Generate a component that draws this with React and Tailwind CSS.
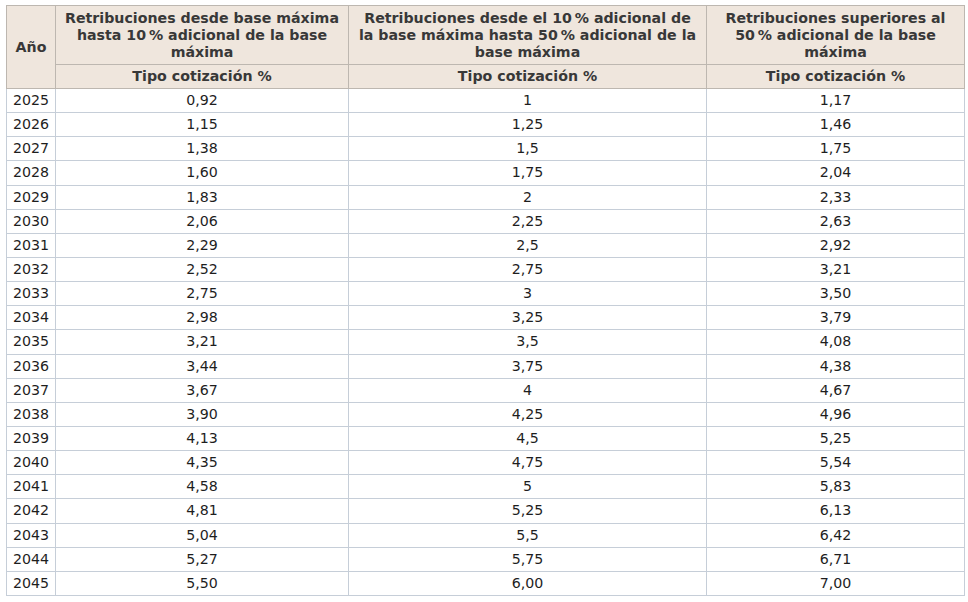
const rows = [
  ["2025", "0,92", "1", "1,17"],
  ["2026", "1,15", "1,25", "1,46"],
  ["2027", "1,38", "1,5", "1,75"],
  ["2028", "1,60", "1,75", "2,04"],
  ["2029", "1,83", "2", "2,33"],
  ["2030", "2,06", "2,25", "2,63"],
  ["2031", "2,29", "2,5", "2,92"],
  ["2032", "2,52", "2,75", "3,21"],
  ["2033", "2,75", "3", "3,50"],
  ["2034", "2,98", "3,25", "3,79"],
  ["2035", "3,21", "3,5", "4,08"],
  ["2036", "3,44", "3,75", "4,38"],
  ["2037", "3,67", "4", "4,67"],
  ["2038", "3,90", "4,25", "4,96"],
  ["2039", "4,13", "4,5", "5,25"],
  ["2040", "4,35", "4,75", "5,54"],
  ["2041", "4,58", "5", "5,83"],
  ["2042", "4,81", "5,25", "6,13"],
  ["2043", "5,04", "5,5", "6,42"],
  ["2044", "5,27", "5,75", "6,71"],
  ["2045", "5,50", "6,00", "7,00"],
];

export default function App() {
  const font = { fontFamily: '"DejaVu Sans", Verdana, sans-serif' };
  const th = "border border-[#bdb7b0] bg-[#efe6dd] text-[#383838] font-bold text-center align-middle px-0 whitespace-nowrap";
  const td = "border border-[#c6ced8] text-[#1e1e1e] text-center align-middle p-0";
  return (
    <div className="w-[968px] h-[602px] bg-white pt-[5px] pl-[6px]" style={font}>
      <table className="border-collapse table-fixed text-[14.2px] leading-[17px]" style={{ width: 958 }}>
        <colgroup>
          <col style={{ width: 49 }} />
          <col style={{ width: 293 }} />
          <col style={{ width: 358 }} />
          <col style={{ width: 258 }} />
        </colgroup>
        <thead>
          <tr className="h-[59px]">
            <th rowSpan={2} className={th}>Año</th>
            <th className={th}>
              Retribuciones desde base máxima
              <br />
              hasta 10&#8239;% adicional de la base
              <br />
              máxima
            </th>
            <th className={th}>
              Retribuciones desde el 10&#8239;% adicional de
              <br />
              la base máxima hasta 50&#8239;% adicional de la
              <br />
              base máxima
            </th>
            <th className={th}>
              Retribuciones superiores al
              <br />
              50&#8239;% adicional de la base
              <br />
              máxima
            </th>
          </tr>
          <tr className="h-[24px]">
            <th className={th}>Tipo cotización %</th>
            <th className={th}>Tipo cotización %</th>
            <th className={th}>Tipo cotización %</th>
          </tr>
        </thead>
        <tbody>
          {rows.map((r) => (
            <tr key={r[0]} className="h-[24.15px]">
              <td className={td + " text-left pl-[6px]"}>{r[0]}</td>
              <td className={td}>{r[1]}</td>
              <td className={td}>{r[2]}</td>
              <td className={td}>{r[3]}</td>
            </tr>
          ))}
        </tbody>
      </table>
    </div>
  );
}
